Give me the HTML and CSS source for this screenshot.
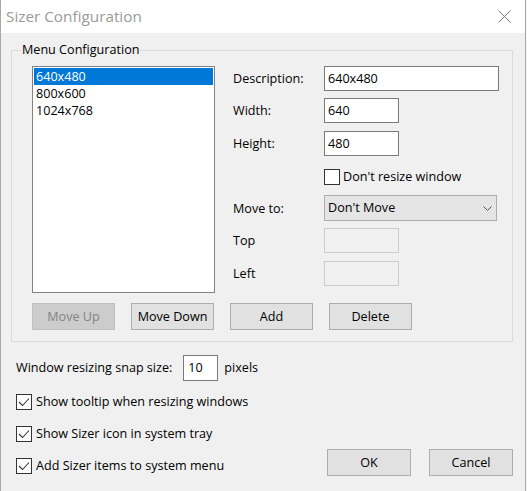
FILE: index.html
```html
<!DOCTYPE html>
<html>
<head>
<meta charset="utf-8">
<link rel="stylesheet" href="styles.css">
</head>
<body>
<div class="window">
  <div class="titlebar">
    <span class="title">Sizer Configuration</span>
    <svg class="close" width="13" height="13" viewBox="0 0 13 13"><path d="M0.5 0.5 L12.5 12.5 M12.5 0.5 L0.5 12.5" stroke="#777" stroke-width="1" fill="none"/></svg>
  </div>
  <div class="content">
    <div class="group">
      <span class="legend">Menu Configuration</span>
      <div class="group-main">
        <div class="listbox">
          <div class="item selected">640x480</div>
          <div class="item">800x600</div>
          <div class="item">1024x768</div>
        </div>
        <div class="fields">
          <div class="label">Description:</div>
          <div class="field"><div class="input wide">640x480</div></div>
          <div class="label">Width:</div>
          <div class="field"><div class="input">640</div></div>
          <div class="label">Height:</div>
          <div class="field"><div class="input">480</div></div>
          <div class="label"></div>
          <div class="field check-field"><span class="box"></span><span>Don't resize window</span></div>
          <div class="label">Move to:</div>
          <div class="field"><div class="select"><span>Don't Move</span><svg width="9" height="5" viewBox="0 0 9 5"><path d="M0.5 0.5 L4.5 4.5 L8.5 0.5" stroke="#555" stroke-width="1" fill="none"/></svg></div></div>
          <div class="label">Top</div>
          <div class="field"><div class="input disabled"></div></div>
          <div class="label">Left</div>
          <div class="field"><div class="input disabled"></div></div>
        </div>
      </div>
      <div class="btnrow">
        <div class="btn disabled">Move Up</div>
        <div class="btn">Move Down</div>
        <div class="btn">Add</div>
        <div class="btn">Delete</div>
      </div>
    </div>
    <div class="bottom">
      <div class="options">
        <div class="snap"><span>Window resizing snap size:</span><div class="input snapbox">10</div><span>pixels</span></div>
        <div class="opt first"><span class="box"><svg width="14" height="14" viewBox="0 0 14 14"><path d="M2 7 L5.5 10.5 L12 3.5" stroke="#333" stroke-width="1.1" fill="none"/></svg></span><span>Show tooltip when resizing windows</span></div>
        <div class="opt"><span class="box"><svg width="14" height="14" viewBox="0 0 14 14"><path d="M2 7 L5.5 10.5 L12 3.5" stroke="#333" stroke-width="1.1" fill="none"/></svg></span><span>Show Sizer icon in system tray</span></div>
        <div class="opt"><span class="box"><svg width="14" height="14" viewBox="0 0 14 14"><path d="M2 7 L5.5 10.5 L12 3.5" stroke="#333" stroke-width="1.1" fill="none"/></svg></span><span>Add Sizer items to system menu</span></div>
      </div>
      <div class="dlgbtns">
        <div class="btn dlg">OK</div>
        <div class="btn dlg">Cancel</div>
      </div>
    </div>
  </div>
</div>
</body>
</html>
```
FILE: styles.css
```css
* { box-sizing: border-box; }
html, body { margin: 0; padding: 0; background: #f4f4f4; }
body {
  font-family: "Open Sans", "Noto Sans", sans-serif;
  font-size: 12.6px;
  line-height: 16px;
  color: #000;
}
.window {
  width: 526px;
  height: 491px;
  border-left: 1px solid #a8a8a8;
  border-right: 1px solid #a8a8a8;
  display: flex;
  flex-direction: column;
  overflow: hidden;
}
.titlebar {
  height: 33px;
  background: #fff;
  display: flex;
  align-items: center;
  justify-content: space-between;
  padding: 0 14px 1px 5px;
}
.title {
  font-size: 15.3px;
  color: #9a9a9a;
  line-height: 20px;
}
.close { display: block; margin-top: 1px; }
.content {
  flex: 1;
  background: #f0f0f0;
  display: flex;
  flex-direction: column;
}
.group {
  position: relative;
  margin: 17px 12px 0 10px;
  height: 292px;
  border: 1px solid #dcdcdc;
  padding: 15px 0 0 20px;
}
.legend {
  position: absolute;
  top: -9px;
  left: 9px;
  padding: 0 1px;
  background: #f0f0f0;
  color: #000;
}
.group-main {
  display: flex;
}
.listbox {
  width: 183px;
  height: 227px;
  border: 1px solid #828282;
  background: #fff;
  padding: 1px;
}
.item {
  height: 17px;
  line-height: 17px;
  padding-left: 2px;
}
.item.selected {
  background: #0078d7;
  color: #fff;
}
.fields {
  margin-left: 18px;
  display: grid;
  grid-template-columns: 91px auto;
  grid-template-rows: 32px 33px 33px 32px 32px 33px 26px;
}
.label {
  height: 25px;
  display: flex;
  align-items: center;
}
.field { height: 25px; display: flex; align-items: center; }
.input {
  width: 75px;
  height: 25px;
  border: 1px solid #7a7a7a;
  background: #fff;
  padding-left: 3px;
  display: flex;
  align-items: center;
}
.input.wide { width: 175px; }
.input.disabled {
  border-color: #cccccc;
  background: #f0f0f0;
}
.check-field { gap: 3px; }
.box {
  width: 16px;
  height: 16px;
  border: 1px solid #333;
  background: #fff;
  display: flex;
  align-items: center;
  justify-content: center;
  flex: none;
}
.box svg { display: block; }
.select {
  width: 173px;
  height: 26px;
  border: 1px solid #adadad;
  background: #e5e5e5;
  display: flex;
  align-items: center;
  justify-content: space-between;
  padding: 0 4px 0 3px;
  margin-top: -1px;
}
.select svg { display: block; }
.btnrow {
  margin-top: 10px;
  display: flex;
  gap: 16px;
}
.btn {
  width: 83px;
  height: 27px;
  border: 1px solid #adadad;
  background: #e1e1e1;
  display: flex;
  align-items: center;
  justify-content: center;
}
.btn.disabled {
  background: #cccccc;
  border-color: #bfbfbf;
  color: #838383;
}
.bottom {
  display: flex;
  justify-content: space-between;
  padding: 0 12px 0 15px;
}
.options {
  display: flex;
  flex-direction: column;
}
.snap {
  margin-top: 13px;
  height: 26px;
  display: flex;
  align-items: center;
}
.snapbox {
  width: 35px;
  height: 26px;
  margin: 0 6px 0 11px;
  padding-left: 4px;
}
.opt {
  height: 32px;
  display: flex;
  align-items: center;
  gap: 4px;
}
.opt.first { margin-top: 5px; }
.dlgbtns {
  align-self: flex-end;
  margin-bottom: 6px;
  display: flex;
  gap: 18px;
}
.btn.dlg { width: 84px; }
```
